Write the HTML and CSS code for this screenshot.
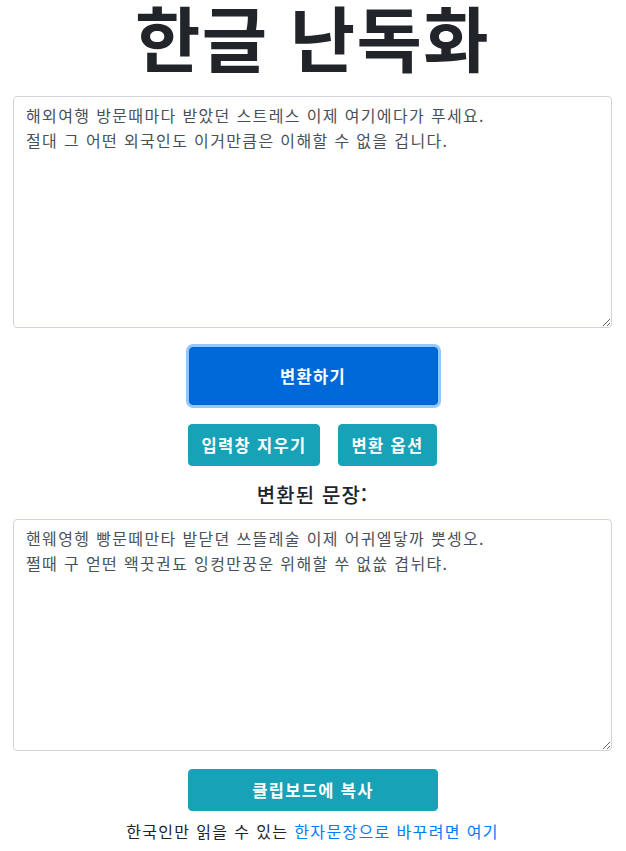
FILE: index.html
```html
<!DOCTYPE html>
<html lang="ko">
<head>
<meta charset="utf-8">
<link rel="stylesheet" href="styles.css">
</head>
<body>
<div class="container">
  <h1 class="title">한글 난독화</h1>
  <textarea class="box">해외여행 방문때마다 받았던 스트레스 이제 여기에다가 푸세요.
절대 그 어떤 외국인도 이거만큼은 이해할 수 없을 겁니다.</textarea>
  <div class="main-row">
    <button class="btn btn-primary">변환하기</button>
  </div>
  <div class="sub-row">
    <button class="btn btn-info btn-clear">입력창 지우기</button>
    <button class="btn btn-info btn-opt">변환 옵션</button>
  </div>
  <h4 class="label">변환된 문장:</h4>
  <textarea class="box">핸웨영헹 빵문떼만타 밭닫뎐 쓰뜰례술 이제 어귀엘닿까 뿟셍오.
쩔때 구 얻떤 왝꿋권됴 잉컹만꿍운 위해할 쑤 없씂 겹뉘탸.</textarea>
  <div class="copy-row">
    <button class="btn btn-info btn-copy">클립보드에 복사</button>
  </div>
  <p class="footer">한국인만 읽을 수 있는 <a href="#">한자문장으로 바꾸려면 여기</a></p>
</div>
</body>
</html>
```
FILE: styles.css
```css
html, body { margin: 0; padding: 0; background: #fff; }
body {
  font-family: "Noto Sans CJK KR", "Noto Sans", sans-serif;
  color: #212529;
  letter-spacing: 0.07em;
}
.container { padding: 0 14px 0 13px; display: flex; flex-direction: column; }
.title {
  margin: 0;
  text-align: center;
  font-size: 71px;
  font-weight: 700;
  line-height: 70px;
  height: 96px;
  letter-spacing: 0.02em;
  color: #212529;
}
.box {
  display: block;
  box-sizing: border-box;
  width: 599px;
  height: 232px;
  margin: 0;
  padding: 6px 12px;
  font-family: "Noto Sans CJK KR", sans-serif;
  font-size: 16px;
  line-height: 25px;
  letter-spacing: 0.085em;
  color: #495057;
  border: 1px solid #ced4da;
  border-radius: 4px;
  resize: vertical;
}
.btn {
  font-family: "Noto Sans CJK KR", sans-serif;
  font-weight: 700;
  letter-spacing: 0.08em;
  color: #fff;
  border: 1px solid transparent;
  border-radius: 4px;
  cursor: pointer;
  padding: 0;
}
.main-row { display: flex; justify-content: center; padding-top: 19px; }
.btn-primary {
  width: 249px;
  height: 58px;
  font-size: 16.5px;
  background: #0069d9;
  border-color: #0062cc;
  box-shadow: 0 0 0 3px rgba(38, 143, 255, 0.5);
  margin-left: 1px;
}
.sub-row { display: flex; justify-content: center; gap: 18px; padding-top: 19px; }
.btn-info {
  background: #17a2b8;
  border-color: #17a2b8;
  font-size: 16.5px;
  height: 42px;
}
.btn-clear { width: 132px; }
.btn-opt { width: 99px; }
.label {
  margin: 15px 0 0;
  text-align: center;
  font-size: 20px;
  font-weight: 500;
  line-height: 28px;
  height: 38px;
}
.copy-row { display: flex; justify-content: center; padding-top: 18px; }
.btn-copy { width: 250px; height: 42px; margin-left: 1px; }
.footer {
  margin: 8px 0 0;
  text-align: center;
  font-size: 16px;
  line-height: 24px;
  letter-spacing: 0.085em;
}
.footer a { color: #007bff; text-decoration: none; }
```
